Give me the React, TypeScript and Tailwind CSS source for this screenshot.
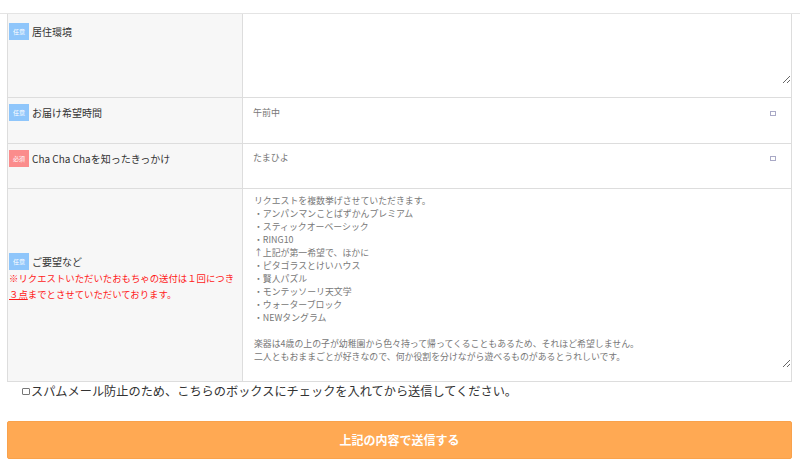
import React from 'react';

const FONT = { fontFamily: '"Noto Sans CJK JP", "Noto Sans", sans-serif' };

function Badge({ required }: { required?: boolean }) {
  return (
    <span
      className={
        'flex h-[17px] w-[20px] shrink-0 items-center justify-center text-[6px] leading-none text-white ' +
        (required ? 'bg-[#fb8c8c]' : 'bg-[#8fc6fb]')
      }
    >
      {required ? '必須' : '任意'}
    </span>
  );
}

function Label({ text, required }: { text: string; required?: boolean }) {
  return (
    <div className="flex items-center gap-[3px]">
      <Badge required={required} />
      <span className="text-[10px] leading-[14px] text-[#333]">{text}</span>
    </div>
  );
}

function SelectValue({ value, pt }: { value: string; pt: string }) {
  return (
    <div className={'flex items-center justify-between pl-[10px] pr-[15px] ' + pt}>
      <span className="text-[9px] leading-[12px] text-[#777]">{value}</span>
      <span className="h-[5px] w-[6px] border border-[#a9a9c6]" />
    </div>
  );
}

const request = `リクエストを複数挙げさせていただきます。
・アンパンマンことばずかんプレミアム
・スティックオーベーシック
・RING10
↑上記が第一希望で、ほかに
・ピタゴラスとけいハウス
・賢人パズル
・モンテッソーリ天文学
・ウォーターブロック
・NEWタングラム

楽器は4歳の上の子が幼稚園から色々持って帰ってくることもあるため、それほど希望しません。
二人ともおままごとが好きなので、何か役割を分けながら遊べるものがあるとうれしいです。`;

export default function App() {
  return (
    <div className="h-[474px] w-[800px] overflow-hidden bg-white" style={FONT}>
      <div className="h-[14px] border-b border-[#e4e4e4]" />

      <div className="ml-[7px] w-[785px] border-x border-[#dddddd]">
        {/* 居住環境 */}
        <div className="flex h-[84px] border-b border-[#dddddd]">
          <div className="w-[235px] shrink-0 border-r border-[#dddddd] bg-[#f7f7f7] pl-[1px] pt-[9px]">
            <Label text="居住環境" />
          </div>
          <div className="flex-1 pb-[13px]">
            <textarea
              className="block h-full w-full resize-y border-0 bg-white pl-[11px] pt-[5px] text-[8.9px] leading-[13px] text-[#777] outline-none"
              defaultValue=""
            />
          </div>
        </div>

        {/* お届け希望時間 */}
        <div className="flex h-[46px] border-b border-[#dddddd]">
          <div className="w-[235px] shrink-0 border-r border-[#dddddd] bg-[#f7f7f7] pl-[1px] pt-[6px]">
            <Label text="お届け希望時間" />
          </div>
          <div className="flex-1">
            <SelectValue value="午前中" pt="pt-[9px]" />
          </div>
        </div>

        {/* きっかけ */}
        <div className="flex h-[45px] border-b border-[#dddddd]">
          <div className="w-[235px] shrink-0 border-r border-[#dddddd] bg-[#f7f7f7] pl-[1px] pt-[6px]">
            <Label text="Cha Cha Chaを知ったきっかけ" required />
          </div>
          <div className="flex-1">
            <SelectValue value="たまひよ" pt="pt-[8px]" />
          </div>
        </div>

        {/* ご要望など */}
        <div className="flex h-[193px] border-b border-[#dddddd]">
          <div className="flex w-[235px] shrink-0 flex-col justify-center border-r border-[#dddddd] bg-[#f7f7f7] pb-[15px] pl-[1px]">
            <Label text="ご要望など" />
            <p className="text-[9.4px] leading-[16px] text-[#ff1a1a]">
              ※リクエストいただいたおもちゃの送付は１回につき
              <br />
              <span className="underline">３点</span>までとさせていただいております。
            </p>
          </div>
          <div className="flex-1 pb-[13px]">
            <textarea
              className="block h-full w-full resize-y border-0 bg-white pl-[11px] pt-[5px] text-[8.9px] leading-[13px] text-[#777] outline-none"
              defaultValue={request}
            />
          </div>
        </div>
      </div>

      <div className="flex items-center pl-[22px] pt-[1px] text-[12.2px] leading-[16px] text-[#333]">
        <span className="mr-[1px] h-[7px] w-[8px] rounded-[1px] border border-[#777]" />
        スパムメール防止のため、こちらのボックスにチェックを入れてから送信してください。
      </div>

      <div className="ml-[7px] mt-[22px] w-[785px]">
        <button className="flex h-[38px] w-full items-center justify-center rounded-[2px] border border-[#f9a24c] bg-[#ffa953] text-[12px] font-bold text-white">
          上記の内容で送信する
        </button>
      </div>
    </div>
  );
}
